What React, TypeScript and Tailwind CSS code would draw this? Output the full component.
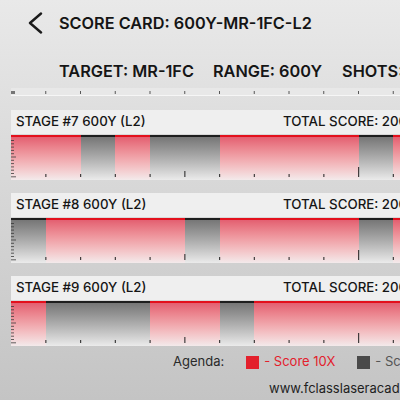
import React from "react";

const SEG = 34.75;
const stages = [
  { n: 7, pattern: "RRGRGGRRRRGR" },
  { n: 8, pattern: "GRRRRGRRRRGR" },
  { n: 9, pattern: "RGGGRRGRRRRR" },
];

function Ticks() {
  const left: React.ReactNode[] = [];
  for (let i = 0; i < 12; i++) {
    const y = 5 + i * 3.3;
    const long = i === 5 || i === 11;
    left.push(<rect key={"l" + i} x={0} y={y} width={long ? 5 : 3} height={1} fill="#333" opacity={0.75} />);
  }
  const bottom: React.ReactNode[] = [];
  for (let i = 1; i <= 12; i++) {
    const x = i * SEG;
    const h = i === 5 ? 6 : i === 10 ? 10 : 3;
    bottom.push(<rect key={"b" + i} x={x - 0.5} y={42 - h} width={1.2} height={h} fill="#222" opacity={0.85} />);
  }
  return (
    <svg className="absolute left-0 top-0" width={420} height={45}>
      {left}
      {bottom}
    </svg>
  );
}

function Bar({ pattern }: { pattern: string }) {
  return (
    <div className="relative h-[45px] w-[420px] bg-[#ececec]">
      <div className="grid h-full grid-cols-[repeat(12,34.75px)]">
        {pattern.split("").map((c, i) =>
          c === "R" ? (
            <div key={i} className="h-full border-t-2 border-[#e3101c] bg-gradient-to-b from-[#e35f71] to-[#f3eaeb]" />
          ) : (
            <div key={i} className="h-full border-t-2 border-[#1e1e1e] bg-gradient-to-b from-[#767676] to-[#ebebeb]" />
          )
        )}
      </div>
      <Ticks />
    </div>
  );
}

export default function App() {
  return (
    <div
      className="relative h-[400px] w-[400px] overflow-hidden bg-gradient-to-b from-[#e9e9e9] via-[#d6d6d6] to-[#c4c4c4] text-[#151515]"
      style={{ fontFamily: "Inter, 'Noto Sans', sans-serif" }}
    >
      <div className="flex h-[44px] items-center pt-[2px]">
        <svg className="ml-[27px]" width="16" height="22" viewBox="0 0 16 22">
          <path d="M14 1.5 L3 11 L14 20.5" fill="none" stroke="#1a1a1a" strokeWidth="2.4" strokeLinecap="round" strokeLinejoin="round" />
        </svg>
        <div className="ml-[16px] whitespace-nowrap text-[16.3px] font-semibold">SCORE CARD: 600Y-MR-1FC-L2</div>
      </div>
      <div className="mt-[15px] flex h-[24px] items-center whitespace-nowrap pl-[59px] text-[16.3px] font-semibold">
        <span className="shrink-0">TARGET: MR-1FC</span>
        <span className="ml-[19px] shrink-0">RANGE: 600Y</span>
        <span className="ml-[20px] shrink-0">SHOTS: 20</span>
      </div>
      <div className="relative ml-[11px] mt-[5px] h-[8px] w-[400px] border-b border-[#f6f6f6] bg-[#e8e8e8]">
        <svg className="absolute left-0 top-0" width="400" height="8">
          <rect x={0} y={3} width={4} height={3} fill="#444" opacity={0.7} />
          {Array.from({ length: 11 }).map((_, i) => (
            <rect key={i} x={(i + 1) * SEG - 0.5} y={3} width={1} height={3} fill="#333" opacity={0.8} />
          ))}
        </svg>
      </div>
      <div className="ml-[11px] mt-[14px] flex flex-col gap-[13px]">
        {stages.map((s) => (
          <div key={s.n} className="flex flex-col">
            <div className="flex h-[25px] w-[420px] items-center border-b border-[#d8d8d8] bg-[#efefef] pl-[5px] text-[13.3px] font-medium whitespace-nowrap">
              <span className="w-[267px] shrink-0">STAGE #{s.n} 600Y (L2)</span>
              <span className="shrink-0">TOTAL SCORE: 200</span>
            </div>
            <Bar pattern={s.pattern} />
          </div>
        ))}
      </div>
      <div className="mt-[7px] flex h-[18px] items-center whitespace-nowrap pl-[173px] text-[13px] text-[#2a2a2a]">
        <span className="shrink-0">Agenda:</span>
        <span className="ml-[22px] h-[13px] w-[13px] shrink-0 bg-[#e3202c]" />
        <span className="ml-[5px] shrink-0 text-[#e3202c]">- Score 10X</span>
        <span className="ml-[22px] h-[13px] w-[13px] shrink-0 bg-[#4a4a4a]" />
        <span className="ml-[5px] shrink-0 text-[#555]">- Score</span>
      </div>
      <div className="mt-[8px] whitespace-nowrap pl-[269px] text-[13px] text-[#1e1e1e]">www.fclasslaseracademy.com</div>
    </div>
  );
}
